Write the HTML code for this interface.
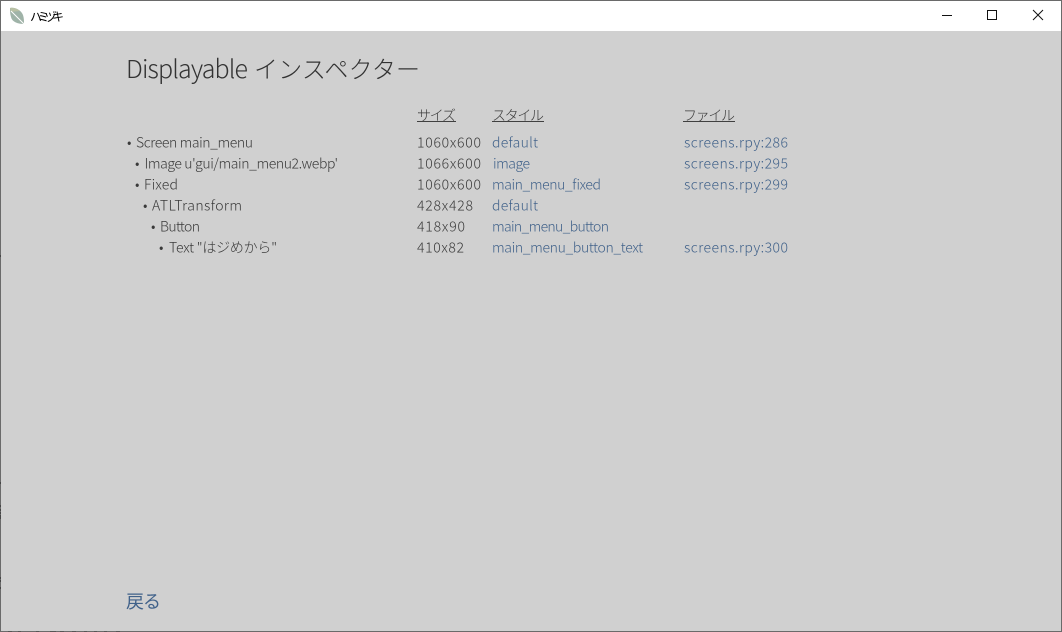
<!DOCTYPE html>
<html><head><meta charset="utf-8"><style>
html,body{margin:0;padding:0;width:1062px;height:632px;overflow:hidden;background:#d0d0d0}
svg{display:block}
text{font-family:"Noto Sans CJK JP","Liberation Sans",sans-serif;font-size:14px;fill:#3a3a3a;font-weight:300}
.l{fill:#41628a}
</style></head><body>
<svg width="1062" height="632" viewBox="0 0 1062 632" xmlns="http://www.w3.org/2000/svg">
<rect width="1062" height="632" fill="#d0d0d0"/>
<rect x="0" y="0" width="1062" height="31" fill="#fff"/>
<rect x="0.5" y="0.5" width="1061" height="631" fill="none" stroke="#6a6a6a"/>
<!-- specks at the window edges -->
<path d="M0 483h1M0 506h1M0 510h1M0 513h1M0 516h1M0 518h1M0 578h1M0 581h1M0 588h1M0 256h1" stroke="#222" stroke-width="1" fill="none"/>
<path d="M8 631.5h4M18 631.5h3M36 631.5h3M50 631.5h6M60 631.5h4M72 631.5h4M84 631.5h3M94 631.5h3M104 631.5h3M116 631.5h4" stroke="#555" stroke-width="1" fill="none"/>
<!-- leaf icon -->
<path d="M10 8C15 7 21 10 23 15C24 18 24 21 24 24C18 24 12 22 11 17C10 14 10 11 10 8Z" fill="#9fb3a8"/>
<path d="M10 8C13 7 18 9 20 11L11 12Z" fill="#b8c0a4"/>
<path d="M11 11L24 24" stroke="#fff" stroke-width="1"/>
<text x="30" y="21" style="font-size:12px;fill:#000;font-weight:400" textLength="34">ハミヅキ</text>
<!-- window controls -->
<path d="M942 15.5H952" stroke="#111" stroke-width="1" fill="none"/>
<rect x="987.5" y="10.5" width="9" height="9" stroke="#111" fill="none"/>
<path d="M1033 10L1043 20M1043 10L1033 20" stroke="#111" stroke-width="1" fill="none"/>

<text x="126" y="78" style="font-size:25px;font-weight:300;fill:#333" textLength="122">Displayable</text>
<text x="254" y="78" style="font-size:24px;font-weight:300;fill:#333" textLength="166">インスペクター</text>

<text x="417" y="120.5" textLength="39">サイズ</text>
<path d="M417 121.5H456M492 121.5H544M683 121.5H735" stroke="#404040" stroke-width="1"/>
<text x="492" y="120.5" textLength="52">スタイル</text>
<text x="683" y="120.5" textLength="52">ファイル</text>

<text x="127" y="147.5">•</text><text x="136" y="147.5" textLength="117">Screen main_menu</text>
<text x="135" y="168.5">•</text><text x="144.5" y="168.5" textLength="193.5">Image u'gui/main_menu2.webp'</text>
<text x="135" y="189.5">•</text><text x="144" y="189.5" textLength="34">Fixed</text>
<text x="143" y="210.5">•</text><text x="152" y="210.5" textLength="90">ATLTransform</text>
<text x="151" y="231.5">•</text><text x="160" y="231.5" textLength="40">Button</text>
<text x="159" y="252.5">•</text><text x="169" y="252.5" textLength="108">Text "はジめから"</text>

<text x="417" y="147.5" textLength="64">1060x600</text>
<text x="417" y="168.5" textLength="64">1066x600</text>
<text x="417" y="189.5" textLength="64">1060x600</text>
<text x="417" y="210.5" textLength="56">428x428</text>
<text x="417" y="231.5" textLength="48">418x90</text>
<text x="417" y="252.5" textLength="47">410x82</text>

<text class="l" x="492" y="147.5" textLength="46">default</text>
<text class="l" x="493" y="168.5" textLength="37">image</text>
<text class="l" x="492" y="189.5" textLength="109">main_menu_fixed</text>
<text class="l" x="492" y="210.5" textLength="46">default</text>
<text class="l" x="492" y="231.5" textLength="117">main_menu_button</text>
<text class="l" x="492" y="252.5" textLength="151">main_menu_button_text</text>

<text class="l" x="684" y="147.5" textLength="104">screens.rpy:286</text>
<text class="l" x="684" y="168.5" textLength="104">screens.rpy:295</text>
<text class="l" x="684" y="189.5" textLength="104">screens.rpy:299</text>
<text class="l" x="684" y="252.5" textLength="104">screens.rpy:300</text>

<text class="l" x="126" y="608" style="font-size:18px;font-weight:400" textLength="35">戻る</text>
</svg>
</body></html>
